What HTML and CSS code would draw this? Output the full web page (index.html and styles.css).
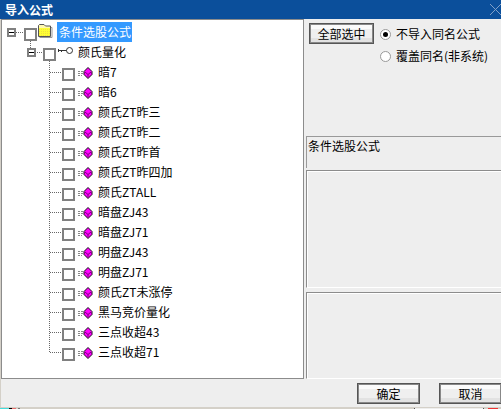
FILE: index.html
```html
<!DOCTYPE html>
<html lang="zh">
<head>
<meta charset="utf-8">
<title>导入公式</title>
<link rel="stylesheet" href="styles.css">
</head>
<body>
<div class="window">
  <header class="titlebar"><span class="title">导入公式</span>
    <svg class="close" width="11" height="11" viewBox="0 0 11 11"><path d="M0 0L11 11M11 0L0 11" stroke="#7f9fc8" fill="none"/></svg>
  </header>
  <div class="body">
    <div class="tree">
      <svg class="lines" width="100" height="358" viewBox="0 0 100 358">
        <path d="M14 12.500H22M28.500 21V29M33 32.500H41M47.500 41V332.500M48 52.500H60M48 72.500H60M48 92.500H60M48 112.500H60M48 132.500H60M48 152.500H60M48 172.500H60M48 192.500H60M48 212.500H60M48 232.500H60M48 252.500H60M48 272.500H60M48 292.500H60M48 312.500H60M48 332.500H60" stroke="#666" stroke-dasharray="1 1" fill="none"/>
      </svg>
      <div class="row root">
        <span class="toggle"></span><span class="check"></span>
        <svg class="folder" width="16" height="16" viewBox="0 0 16 16">
          <defs><pattern id="dither" width="2" height="2" patternUnits="userSpaceOnUse"><rect width="2" height="2" fill="#ffff33"/><rect width="1" height="1" fill="#f0e040"/></pattern></defs>
          <path d="M1.500 13.500V2.500L2.500 1.500H7L8.500 3H13.500V13.500Z" fill="#fff8b0" stroke="#555"/>
          <rect x="2" y="5" width="11" height="8" fill="url(#dither)"/>
          <path d="M14 4.500H15V14.500H2.500" fill="none" stroke="#999"/>
        </svg>
        <span class="label selected">条件选股公式</span>
      </div>
      <div class="row group">
        <span class="toggle"></span><span class="check"></span>
        <svg class="key" width="16" height="10" viewBox="0 0 16 10"><circle cx="11.500" cy="4.500" r="3" fill="#fff" stroke="#333"/><path d="M0.500 3V6M0.500 4.500H8.500M3.500 4.500V6" stroke="#333" fill="none"/></svg>
        <span class="label">颜氏量化</span>
      </div>
      <div class="row leaf"><span class="check"></span><svg class="gem" width="20" height="12" viewBox="0 0 20 12"><use href="#gem"/></svg><span class="label">暗7</span></div>
      <div class="row leaf"><span class="check"></span><svg class="gem" width="20" height="12" viewBox="0 0 20 12"><use href="#gem"/></svg><span class="label">暗6</span></div>
      <div class="row leaf"><span class="check"></span><svg class="gem" width="20" height="12" viewBox="0 0 20 12"><use href="#gem"/></svg><span class="label">颜氏ZT昨三</span></div>
      <div class="row leaf"><span class="check"></span><svg class="gem" width="20" height="12" viewBox="0 0 20 12"><use href="#gem"/></svg><span class="label">颜氏ZT昨二</span></div>
      <div class="row leaf"><span class="check"></span><svg class="gem" width="20" height="12" viewBox="0 0 20 12"><use href="#gem"/></svg><span class="label">颜氏ZT昨首</span></div>
      <div class="row leaf"><span class="check"></span><svg class="gem" width="20" height="12" viewBox="0 0 20 12"><use href="#gem"/></svg><span class="label">颜氏ZT昨四加</span></div>
      <div class="row leaf"><span class="check"></span><svg class="gem" width="20" height="12" viewBox="0 0 20 12"><use href="#gem"/></svg><span class="label">颜氏ZTALL</span></div>
      <div class="row leaf"><span class="check"></span><svg class="gem" width="20" height="12" viewBox="0 0 20 12"><use href="#gem"/></svg><span class="label">暗盘ZJ43</span></div>
      <div class="row leaf"><span class="check"></span><svg class="gem" width="20" height="12" viewBox="0 0 20 12"><use href="#gem"/></svg><span class="label">暗盘ZJ71</span></div>
      <div class="row leaf"><span class="check"></span><svg class="gem" width="20" height="12" viewBox="0 0 20 12"><use href="#gem"/></svg><span class="label">明盘ZJ43</span></div>
      <div class="row leaf"><span class="check"></span><svg class="gem" width="20" height="12" viewBox="0 0 20 12"><use href="#gem"/></svg><span class="label">明盘ZJ71</span></div>
      <div class="row leaf"><span class="check"></span><svg class="gem" width="20" height="12" viewBox="0 0 20 12"><use href="#gem"/></svg><span class="label">颜氏ZT未涨停</span></div>
      <div class="row leaf"><span class="check"></span><svg class="gem" width="20" height="12" viewBox="0 0 20 12"><use href="#gem"/></svg><span class="label">黑马竞价量化</span></div>
      <div class="row leaf"><span class="check"></span><svg class="gem" width="20" height="12" viewBox="0 0 20 12"><use href="#gem"/></svg><span class="label">三点收超43</span></div>
      <div class="row leaf"><span class="check"></span><svg class="gem" width="20" height="12" viewBox="0 0 20 12"><use href="#gem"/></svg><span class="label">三点收超71</span></div>
    </div>
    <aside class="side">
      <div class="options">
        <button class="btn select-all" type="button">全部选中</button>
        <div class="radios">
          <div class="radio-row"><span class="radio on"></span><span>不导入同名公式</span></div>
          <div class="radio-row"><span class="radio"></span><span>覆盖同名(非系统)</span></div>
        </div>
      </div>
      <div class="name-box">条件选股公式</div>
      <div class="box box-mid"></div>
      <div class="box box-low"></div>
    </aside>
  </div>
  <footer class="footer">
    <button class="btn action" type="button">确定</button>
    <button class="btn action" type="button">取消</button>
  </footer>
</div>
<div class="strip">
  <span class="seg cyan"></span><span class="seg black"></span><span class="seg salmon"></span><span class="seg gray"></span>
  <span class="seg spacer"></span>
  <span class="seg dark"></span><span class="seg pale"></span><span class="seg dark"></span><span class="seg red"></span>
</div>
<svg class="defs" width="0" height="0">
  <symbol id="gem" viewBox="0 0 20 12">
    <path d="M2 4.500H7M2 6.500H7M2 8.500H6" stroke="#888" stroke-dasharray="2 1" fill="none"/>
    <path d="M12 0.500L16 4.500V7.500L12 11.500L8 7.500V4.500Z" fill="#f0f" stroke="#111"/>
    <path d="M9 5L12 7.500L15 5M12 7.500V10" stroke="#800080" fill="none"/>
  </symbol>
</svg>
</body>
</html>
```
FILE: styles.css
```css
* { box-sizing: border-box; }
html, body { margin: 0; padding: 0; }
body { width: 501px; height: 409px; overflow: hidden; background: #d4d0c8; font: 12px/16px "Noto Sans CJK SC", "Liberation Sans", sans-serif; color: #000; }
.window { width: 501px; height: 407px; background: #eee; display: flex; flex-direction: column; overflow: hidden; }
.titlebar { height: 19px; flex: none; background: #0b4f9b; color: #fff; font-weight: 700; padding-left: 5px; display: flex; align-items: center; justify-content: space-between; }
.body { height: 360px; flex: none; display: flex; border-left: 1px solid #d4d0c8; }
.tree { position: relative; width: 303px; height: 360px; flex: none; background: #fff; border: 1px solid #8c8c8c; padding-top: 2px; }
.lines { position: absolute; left: 0; top: 0; }
.row { position: relative; height: 20px; display: flex; align-items: center; }
.root { padding-left: 5px; }
.group { padding-left: 25px; }
.leaf { padding-left: 60px; }
.toggle { width: 9px; height: 9px; border: 2px solid #808080; background: #fff; position: relative; flex: none; }
.toggle::after { content: ""; position: absolute; left: 0; right: 0; top: 2px; height: 1px; background: #000; }
.root .toggle { margin-right: 8px; }
.group .toggle { margin-right: 7px; }
.check { width: 13px; height: 13px; border: 2px solid #808080; background: #fff; flex: none; margin-top: 4px; }
.folder { margin-top: -3px; flex: none; }
.key { margin-left: 2px; margin-top: -2px; flex: none; }
.gem { margin-left: 1px; margin-top: 2px; flex: none; }
.label { white-space: nowrap; }
.root .label { margin-left: 4px; }
.group .label { margin-left: 4px; }
.leaf .label { margin-left: 2px; }
.selected { background: #3399ff; color: #fff; padding: 0 1px 0 2px; height: 20px; line-height: 20px; }
.side { flex: 1; min-width: 0; padding: 4px 0 0 2px; display: flex; flex-direction: column; }
.options { height: 113px; flex: none; display: flex; align-items: flex-start; padding-left: 3px; }
.btn { font: inherit; color: #000; padding: 0; border: 1px solid #555; box-shadow: inset 0 0 0 1px #888; background: linear-gradient(#fbfbfb 0 5px, #efefef 5px 14px, #e2e2e2 14px); }
.select-all { width: 65px; height: 21px; }
.radios { margin-left: 6px; }
.radio-row { display: flex; align-items: center; height: 22px; gap: 5px; white-space: nowrap; }
.radio { width: 11px; height: 11px; border-radius: 50%; background: #fff; border: 1px solid #999; position: relative; flex: none; }
.on::after { content: ""; position: absolute; left: 2px; top: 2px; width: 5px; height: 5px; border-radius: 50%; background: #000; }
.name-box { height: 32px; flex: none; border-top: 1px solid #999; border-left: 1px solid #999; padding-left: 1px; line-height: 18px; }
.box { flex: none; border-top: 1px solid #8c8c8c; border-left: 1px solid #8c8c8c; border-bottom: 1px solid #fff; box-shadow: inset 1px 1px #fff; }
.box-mid { height: 118px; margin-top: 2px; }
.box-low { height: 87px; margin-top: 4px; }
.footer { flex: 1; display: flex; justify-content: flex-end; gap: 19px; padding-top: 4px; margin-right: -1px; border-left: 1px solid #d4d0c8; }
.action { width: 63px; height: 21px; }
.strip { height: 2px; display: flex; align-items: flex-end; }
.seg { height: 1px; flex: none; }
.cyan { width: 9px; background: #44dddd; }
.black { width: 3px; background: #000; }
.salmon { width: 4px; background: #e87070; margin-right: 2px; }
.gray { width: 2px; background: #777; }
.spacer { flex: 1; }
.dark { width: 1px; background: #555; }
.pale { width: 68px; background: #eee; }
.red { width: 10px; background: #ee3333; margin-left: 4px; margin-right: 3px; }
.defs { position: absolute; }
```
